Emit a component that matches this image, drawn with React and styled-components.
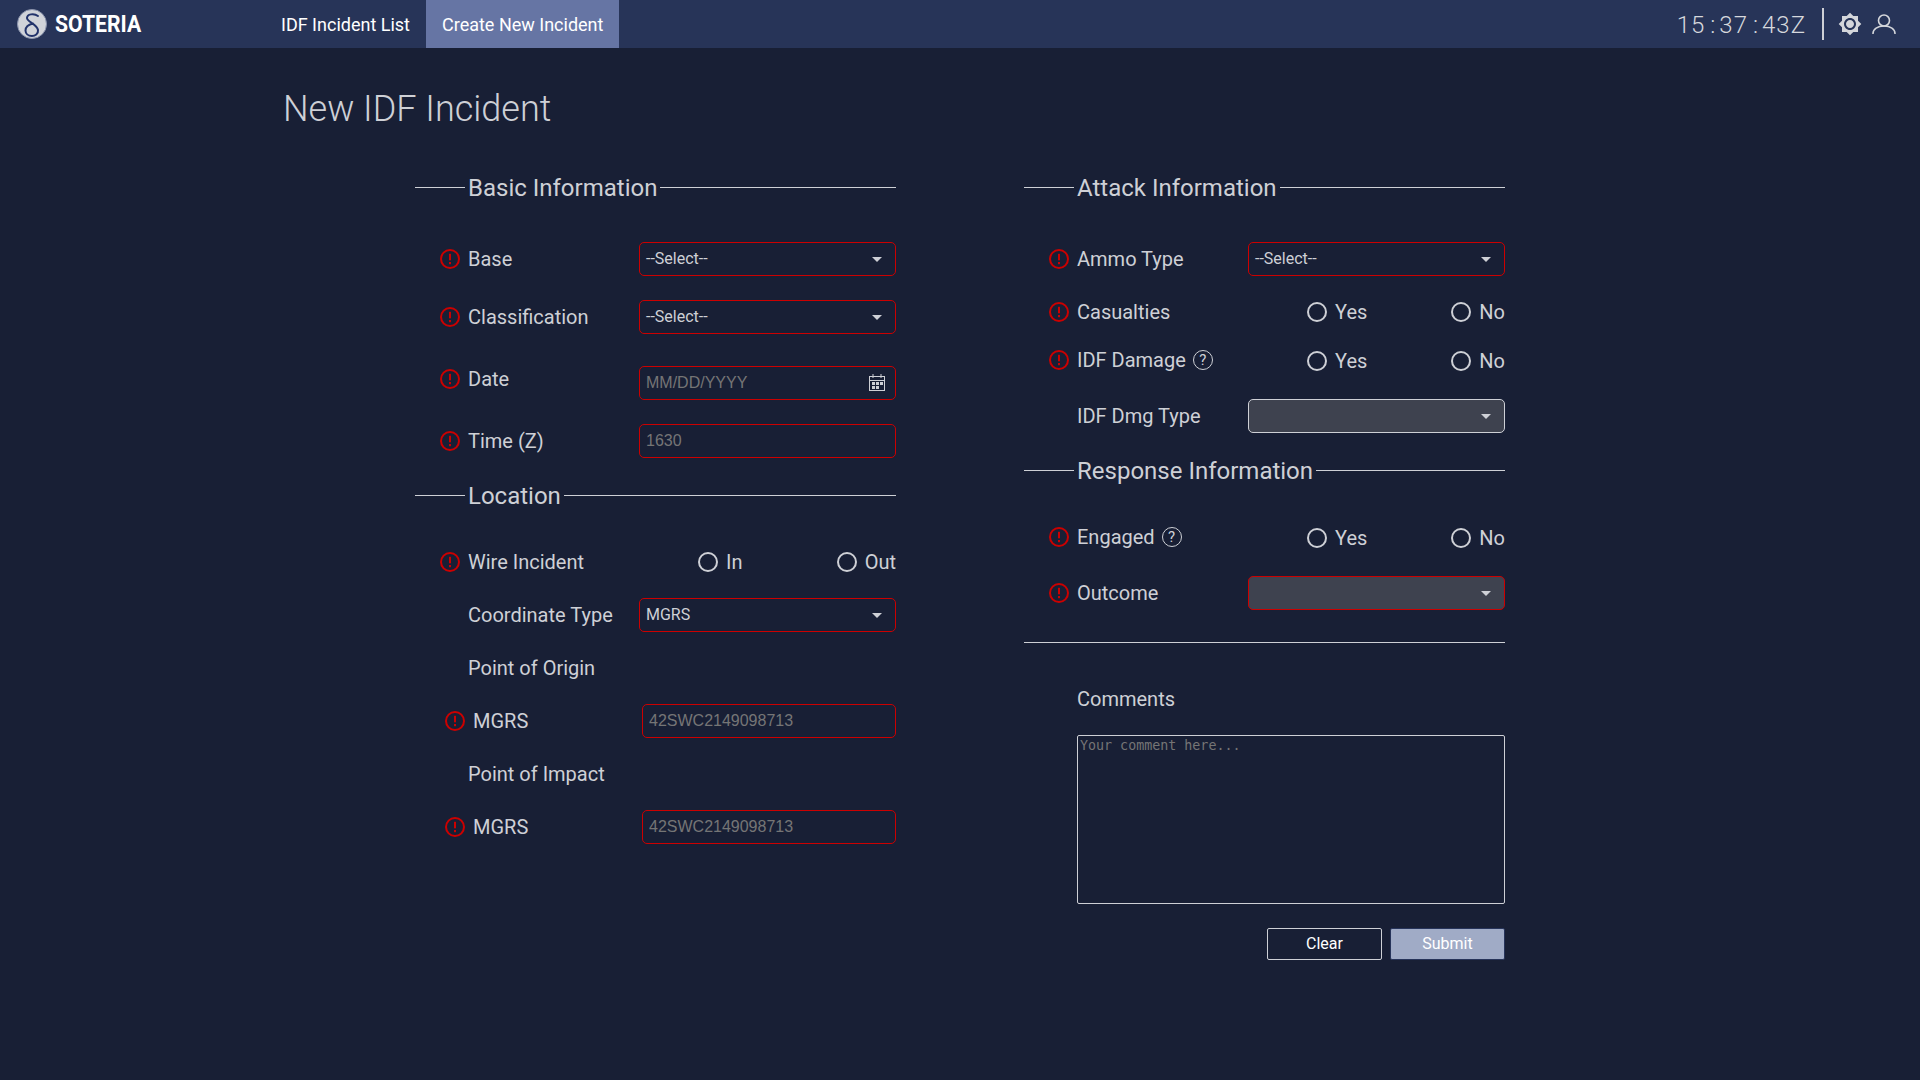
import React from "react";
import styled, { createGlobalStyle } from "styled-components";
import { MdBrightness7 } from "react-icons/md";

const Global = createGlobalStyle`
  html, body { margin: 0; padding: 0; height: 100%; background: #181f35; }
  body { font-family: Roboto, "Noto Sans", sans-serif; color: #ced0d6; }
  #root { min-height: 100%; }
`;

const Page = styled.div`
  width: 1920px;
  height: 1080px;
  overflow: hidden;
  background: #181f35;
`;
const TopBar = styled.header`
  display: flex;
  align-items: stretch;
  height: 48px;
  background: #273458;
`;
const Brand = styled.div`
  display: flex;
  align-items: center;
  gap: 8px;
  width: 265px;
  padding-left: 17px;
  box-sizing: border-box;
`;
const BrandName = styled.span`
  display: inline-block;
  font-size: 23px;
  font-weight: 700;
  color: #fff;
  transform: scaleX(0.92);
  transform-origin: left center;
`;
const NavLink = styled.a`
  display: flex;
  align-items: center;
  padding: 0 16px;
  font-size: 18px;
  color: #fff;
  background: ${(p) => (p.$active ? "#6675a4" : "transparent")};
`;
const Status = styled.div`
  display: flex;
  align-items: center;
  margin-left: auto;
  padding-right: 24px;
`;
const Clock = styled.span`
  font-size: 24px;
  line-height: 26px;
  padding-top: 2px;
  letter-spacing: 1px;
  font-weight: 300;
  color: #d6d8dd;
`;
const Colon = styled.span`
  margin: 0 3px 0 5px;
`;
const Divider = styled.span`
  width: 2px;
  height: 32px;
  background: #ced0d6;
  margin: 0 14px 0 16px;
`;
const IconBtn = styled.span`
  display: flex;
  color: #d4d6db;
  margin-left: ${(p) => p.$ml || 0}px;
`;
const Main = styled.main`
  padding: 0 0 0 283px;
`;
const Title = styled.h1`
  margin: 0;
  height: 122px;
  line-height: 122px;
  font-size: 36px;
  font-weight: 300;
  color: #ced0d6;
`;
const Columns = styled.div`
  display: flex;
  gap: 128px;
  margin-left: 132px;
`;
const Column = styled.section`
  width: 481px;
  display: flex;
  flex-direction: column;
`;
const Heading = styled.div`
  display: flex;
  align-items: center;
  height: 34px;
  margin-top: ${(p) => p.$mt || 0}px;
`;
const Rule = styled.span`
  height: 1px;
  background: #ced0d6;
  flex: ${(p) => (p.$grow ? 1 : "0 0 50px")};
`;
const HeadingText = styled.h2`
  margin: 2px 3px 0 3px;
  font-size: 24px;
  font-weight: 400;
  color: #ced0d6;
  white-space: nowrap;
`;
const Row = styled.div`
  display: flex;
  align-items: ${(p) => (p.$top ? "flex-start" : "center")};
  min-height: 34px;
  margin-top: ${(p) => p.$mt}px;
  padding-left: ${(p) => (p.$indent ? 30 : 25)}px;
`;
const IconSlot = styled.span`
  display: flex;
  flex: 0 0 20px;
  height: ${(p) => (p.$top ? "26px" : "auto")};
  align-items: center;
  margin-right: 8px;
  margin-bottom: ${(p) => (p.$raise ? 2 : 0)}px;
`;
const Label = styled.label`
  display: flex;
  align-items: center;
  gap: 7px;
  font-size: 20px;
  line-height: 26px;
  color: #ced0d6;
  margin-bottom: ${(p) => (p.$raise ? 2 : 0)}px;
`;
const Help = styled.span`
  display: inline-flex;
  align-items: center;
  justify-content: center;
  width: 20px;
  height: 20px;
  box-sizing: border-box;
  border: 1px solid #ced0d6;
  border-radius: 50%;
  font-size: 15px;
  line-height: 1;
`;
const Select = styled.div`
  display: flex;
  align-items: center;
  justify-content: space-between;
  box-sizing: border-box;
  margin-left: auto;
  flex: 0 0 257px;
  height: 34px;
  padding: 0 13px 2px 6px;
  border: 1px solid ${(p) => (p.$valid ? "#ced0d6" : "#cc0000")};
  border-radius: 5px;
  background: ${(p) => (p.$disabled ? "#3e424f" : "transparent")};
  font-size: 16px;
  color: #ced0d6;
`;
const Caret = styled.span`
  width: 0;
  height: 0;
  margin-top: 2px;
  border-left: 5px solid transparent;
  border-right: 5px solid transparent;
  border-top: 5px solid #ced0d6;
`;
const InputBox = styled.div`
  display: flex;
  align-items: center;
  box-sizing: border-box;
  margin-left: auto;
  flex: 0 0 ${(p) => (p.$narrow ? 254 : 257)}px;
  height: 34px;
  padding: 0 9px 0 6px;
  border: 1px solid #cc0000;
  border-radius: 5px;
`;
const Input = styled.input`
  flex: 1;
  min-width: 0;
  padding: 0;
  border: 0;
  outline: 0;
  background: transparent;
  font-family: "Liberation Sans", Arial, sans-serif;
  font-size: 16px;
  color: #ced0d6;
  &::placeholder { color: #757575; opacity: 1; }
`;
const RadioGroup = styled.div`
  display: flex;
  justify-content: space-between;
  box-sizing: border-box;
  margin-left: auto;
  flex: 0 0 257px;
  padding-left: 59px;
`;
const RadioItem = styled.span`
  display: flex;
  align-items: center;
  gap: 8px;
  font-size: 20px;
  color: #ced0d6;
`;
const RadioDot = styled.span`
  width: 20px;
  height: 20px;
  box-sizing: border-box;
  border: 2px solid #ced0d6;
  border-radius: 50%;
`;
const Separator = styled.hr`
  width: 100%;
  height: 1px;
  margin: 32px 0 0;
  border: 0;
  background: #ced0d6;
`;
const Comment = styled.textarea`
  display: block;
  box-sizing: border-box;
  width: 428px;
  height: 169px;
  margin: ${(p) => p.$mt}px 0 0 53px;
  padding: 2px;
  border: 1px solid #ced0d6;
  border-radius: 2px;
  background: transparent;
  resize: none;
  outline: 0;
  font-family: "DejaVu Sans Mono", monospace;
  font-size: 13.33px;
  color: #ced0d6;
  &::placeholder { color: #757575; opacity: 1; }
`;
const Actions = styled.div`
  display: flex;
  justify-content: flex-end;
  gap: 8px;
  margin-top: 24px;
`;
const Button = styled.button`
  width: 115px;
  height: 32px;
  box-sizing: border-box;
  padding: 0 0 2px;
  border-radius: 2px;
  border: 1px solid ${(p) => (p.$primary ? "#27345a" : "#ced0d6")};
  background: ${(p) => (p.$primary ? "#a0abc6" : "transparent")};
  color: #fff;
  font-family: Roboto, sans-serif;
  font-size: 16px;
`;

const Logo = () => (
  <svg width="30" height="30" viewBox="0 0 30 30">
    <circle cx="15" cy="15" r="14.5" fill="#d0d3d9" stroke="#8a93ad" strokeWidth="1" />
    <path
      d="M21 7C17 4 10 5 10 9C10 13 20 15 21 21C21.500 25 18 27 15 27C11 27 8.500 24.500 8.500 21.500C8.500 18 12 15.500 16 14.500"
      fill="none"
      stroke="#22336b"
      strokeWidth="2"
      strokeLinecap="round"
    />
  </svg>
);
const UserIcon = () => (
  <svg width="24" height="20" viewBox="0 0 24 20" fill="none" stroke="currentColor" strokeWidth="1.6">
    <circle cx="12" cy="6.500" r="5.500" />
    <path d="M1 19.500C1 15 5.500 12 12 12S23 15 23 19.500" strokeLinecap="round" />
  </svg>
);
const ErrorIcon = () => (
  <svg width="20" height="20" viewBox="0 0 20 20">
    <circle cx="10" cy="10" r="9" fill="none" stroke="#cc0000" strokeWidth="2" />
    <rect x="9" y="4.800" width="2" height="6.500" fill="#cc0000" />
    <rect x="9" y="13" width="2" height="2.200" fill="#cc0000" />
  </svg>
);
const CalendarIcon = () => (
  <svg width="18" height="19" viewBox="0 0 18 19" fill="none" stroke="#ced0d6" strokeWidth="1">
    <rect x="1.500" y="2.500" width="15" height="14" />
    <path d="M1.500 6.500h15M5 0v4M13 0v4" />
    <g fill="#ced0d6" stroke="none">
      <rect x="4" y="8" width="3" height="3" />
      <rect x="8" y="8" width="3" height="3" />
      <rect x="12" y="8" width="3" height="3" />
      <rect x="4" y="12" width="3" height="3" />
      <rect x="8" y="12" width="3" height="3" />
    </g>
  </svg>
);

const SectionHeading = ({ mt, children }) => (
  <Heading $mt={mt}>
    <Rule />
    <HeadingText>{children}</HeadingText>
    <Rule $grow />
  </Heading>
);
const FormRow = ({ mt, error, top, indent, label, help, children }) => (
  <Row $mt={mt} $top={top} $indent={indent}>
    <IconSlot $top={top} $raise={help}>{error && <ErrorIcon />}</IconSlot>
    <Label $raise={help}>
      {label}
      {help && <Help>?</Help>}
    </Label>
    {children}
  </Row>
);
const SelectField = ({ value, valid, disabled }) => (
  <Select $valid={valid} $disabled={disabled}>
    <span>{value}</span>
    <Caret />
  </Select>
);
const Radios = ({ options }) => (
  <RadioGroup>
    {options.map((o) => (
      <RadioItem key={o}>
        <RadioDot />
        {o}
      </RadioItem>
    ))}
  </RadioGroup>
);

export default function App() {
  return (
    <Page>
      <Global />
      <TopBar>
        <Brand>
          <Logo />
          <BrandName>SOTERIA</BrandName>
        </Brand>
        <NavLink>IDF Incident List</NavLink>
        <NavLink $active>Create New Incident</NavLink>
        <Status>
          <Clock>15<Colon>:</Colon>37<Colon>:</Colon>43Z</Clock>
          <Divider />
          <IconBtn><MdBrightness7 size={24} /></IconBtn>
          <IconBtn $ml={10}><UserIcon /></IconBtn>
        </Status>
      </TopBar>
      <Main>
        <Title>New IDF Incident</Title>
        <Columns>
          <Column>
            <SectionHeading>Basic Information</SectionHeading>
            <FormRow mt={38} error label="Base"><SelectField value="--Select--" /></FormRow>
            <FormRow mt={24} error label="Classification"><SelectField value="--Select--" /></FormRow>
            <FormRow mt={32} error top label="Date">
              <InputBox>
                <Input placeholder="MM/DD/YYYY" />
                <CalendarIcon />
              </InputBox>
            </FormRow>
            <FormRow mt={24} error label="Time (Z)">
              <InputBox><Input placeholder="1630" /></InputBox>
            </FormRow>
            <SectionHeading mt={20}>Location</SectionHeading>
            <FormRow mt={33} error label="Wire Incident"><Radios options={["In", "Out"]} /></FormRow>
            <FormRow mt={19} label="Coordinate Type"><SelectField value="MGRS" /></FormRow>
            <FormRow mt={19} label="Point of Origin" />
            <FormRow mt={19} error indent label="MGRS">
              <InputBox $narrow><Input placeholder="42SWC2149098713" /></InputBox>
            </FormRow>
            <FormRow mt={19} label="Point of Impact" />
            <FormRow mt={19} error indent label="MGRS">
              <InputBox $narrow><Input placeholder="42SWC2149098713" /></InputBox>
            </FormRow>
          </Column>
          <Column>
            <SectionHeading>Attack Information</SectionHeading>
            <FormRow mt={38} error label="Ammo Type"><SelectField value="--Select--" /></FormRow>
            <FormRow mt={19} error label="Casualties"><Radios options={["Yes", "No"]} /></FormRow>
            <FormRow mt={15} error help label="IDF Damage"><Radios options={["Yes", "No"]} /></FormRow>
            <FormRow mt={21} label="IDF Dmg Type"><SelectField valid disabled /></FormRow>
            <SectionHeading mt={20}>Response Information</SectionHeading>
            <FormRow mt={34} error help label="Engaged"><Radios options={["Yes", "No"]} /></FormRow>
            <FormRow mt={21} error label="Outcome"><SelectField disabled /></FormRow>
            <Separator />
            <FormRow mt={39} label="Comments" />
            <Comment $mt={19} placeholder="Your comment here..." />
            <Actions>
              <Button>Clear</Button>
              <Button $primary>Submit</Button>
            </Actions>
          </Column>
        </Columns>
      </Main>
    </Page>
  );
}
